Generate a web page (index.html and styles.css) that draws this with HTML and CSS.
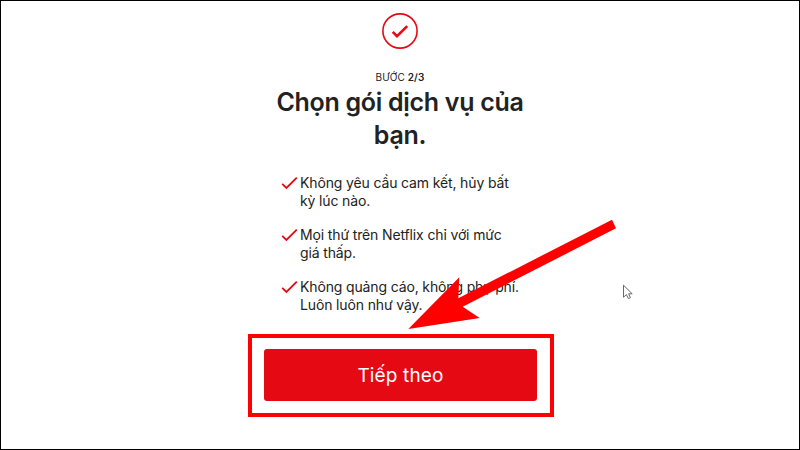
FILE: index.html
```html
<!DOCTYPE html>
<html lang="vi">
<head>
    <meta charset="UTF-8">
    <title>Netflix</title>
    <link rel="stylesheet" href="styles.css">
</head>
<body>
    <main class="page">
        <svg class="step-icon" viewBox="0 0 36 36">
            <circle cx="18" cy="18" r="17.1" fill="none" stroke="#e50914" stroke-width="1.6"/>
            <path d="M10.7 18.9l4.3 4.3 10.2-10.1" fill="none" stroke="#e50914" stroke-width="2.6"/>
        </svg>

        <div class="step">BƯỚC <b>2/3</b></div>
        <h1>Chọn gói dịch vụ của bạn.</h1>

        <ul class="benefits">
            <li>
                <svg class="check" viewBox="0 0 18 18"><path d="M1.2 9.8l4.2 4.1L15.8 3.6"/></svg>
                <span>Không yêu cầu cam kết, hủy bất<br>kỳ lúc nào.</span>
            </li>
            <li>
                <svg class="check" viewBox="0 0 18 18"><path d="M1.2 9.8l4.2 4.1L15.8 3.6"/></svg>
                <span>Mọi thứ trên Netflix chỉ với mức<br>giá thấp.</span>
            </li>
            <li>
                <svg class="check" viewBox="0 0 18 18"><path d="M1.2 9.8l4.2 4.1L15.8 3.6"/></svg>
                <span>Không quảng cáo, không phụ phí.<br>Luôn luôn như vậy.</span>
            </li>
        </ul>

        <div class="highlight">
            <button class="next" type="button">Tiếp theo</button>
        </div>

        <!-- Arrow pointing at the button -->
        <svg class="arrow" viewBox="0 0 208 110">
            <polygon points="0.3,109 51.3,57.3 50.3,78.3 204,-0.3 208,8.3 54.7,86.7 71.7,98" fill="#ff0000"/>
        </svg>

        <svg class="cursor" viewBox="0 0 12 16">
            <path d="M1.5 1.2v12l2.9-2.6 2 4 2-.9-1.8-3.9h3.6z" fill="#fff" stroke="#66666e" stroke-width="1"/>
        </svg>
    </main>
</body>
</html>
```

FILE: styles.css
```css
* {
    box-sizing: border-box;
}

body {
    margin: 0;
    font-family: Inter, "Noto Sans", sans-serif;
    color: #222;
    background: #fff;
}

.page {
    position: relative;
    display: flex;
    flex-direction: column;
    align-items: center;
    width: 800px;
    height: 450px;
    padding-top: 12px;
    border: 1px solid #000;
    overflow: hidden;
}

.step-icon {
    width: 36px;
    height: 36px;
}

.step {
    margin-top: 21px;
    font-size: 10px;
    line-height: 14px;
    letter-spacing: 0.1px;
}

.step b {
    font-weight: 600;
}

h1 {
    width: 272px;
    margin: 2px 0 0;
    font-size: 25px;
    font-weight: 600;
    line-height: 33px;
    letter-spacing: -0.3px;
    text-align: center;
}

.benefits {
    display: flex;
    flex-direction: column;
    gap: 16px;
    width: 238px;
    margin: 22px 0 0;
    padding: 0;
    list-style: none;
    font-size: 14px;
    line-height: 18px;
    letter-spacing: -0.14px;
}

.benefits li {
    display: flex;
    gap: 1px;
    white-space: nowrap;
}

.check {
    flex: none;
    width: 18px;
    height: 18px;
    fill: none;
    stroke: #e50914;
    stroke-width: 1.8;
}

.highlight {
    display: flex;
    width: 306px;
    height: 83px;
    margin: 20px 0 0 2px;
    padding: 11px 13px 12px 12px;
    border: 4px solid #ff0000;
}

.next {
    flex: 1;
    height: 52px;
    padding: 0;
    border: none;
    border-radius: 3px;
    background: #e50914;
    color: #fff;
    font-family: inherit;
    font-size: 19px;
    letter-spacing: 0.15px;
}

.arrow {
    position: absolute;
    left: 407px;
    top: 219px;
    width: 208px;
    height: 110px;
    overflow: visible;
}

.cursor {
    position: absolute;
    left: 621px;
    top: 283px;
    width: 12px;
    height: 16px;
}
```
